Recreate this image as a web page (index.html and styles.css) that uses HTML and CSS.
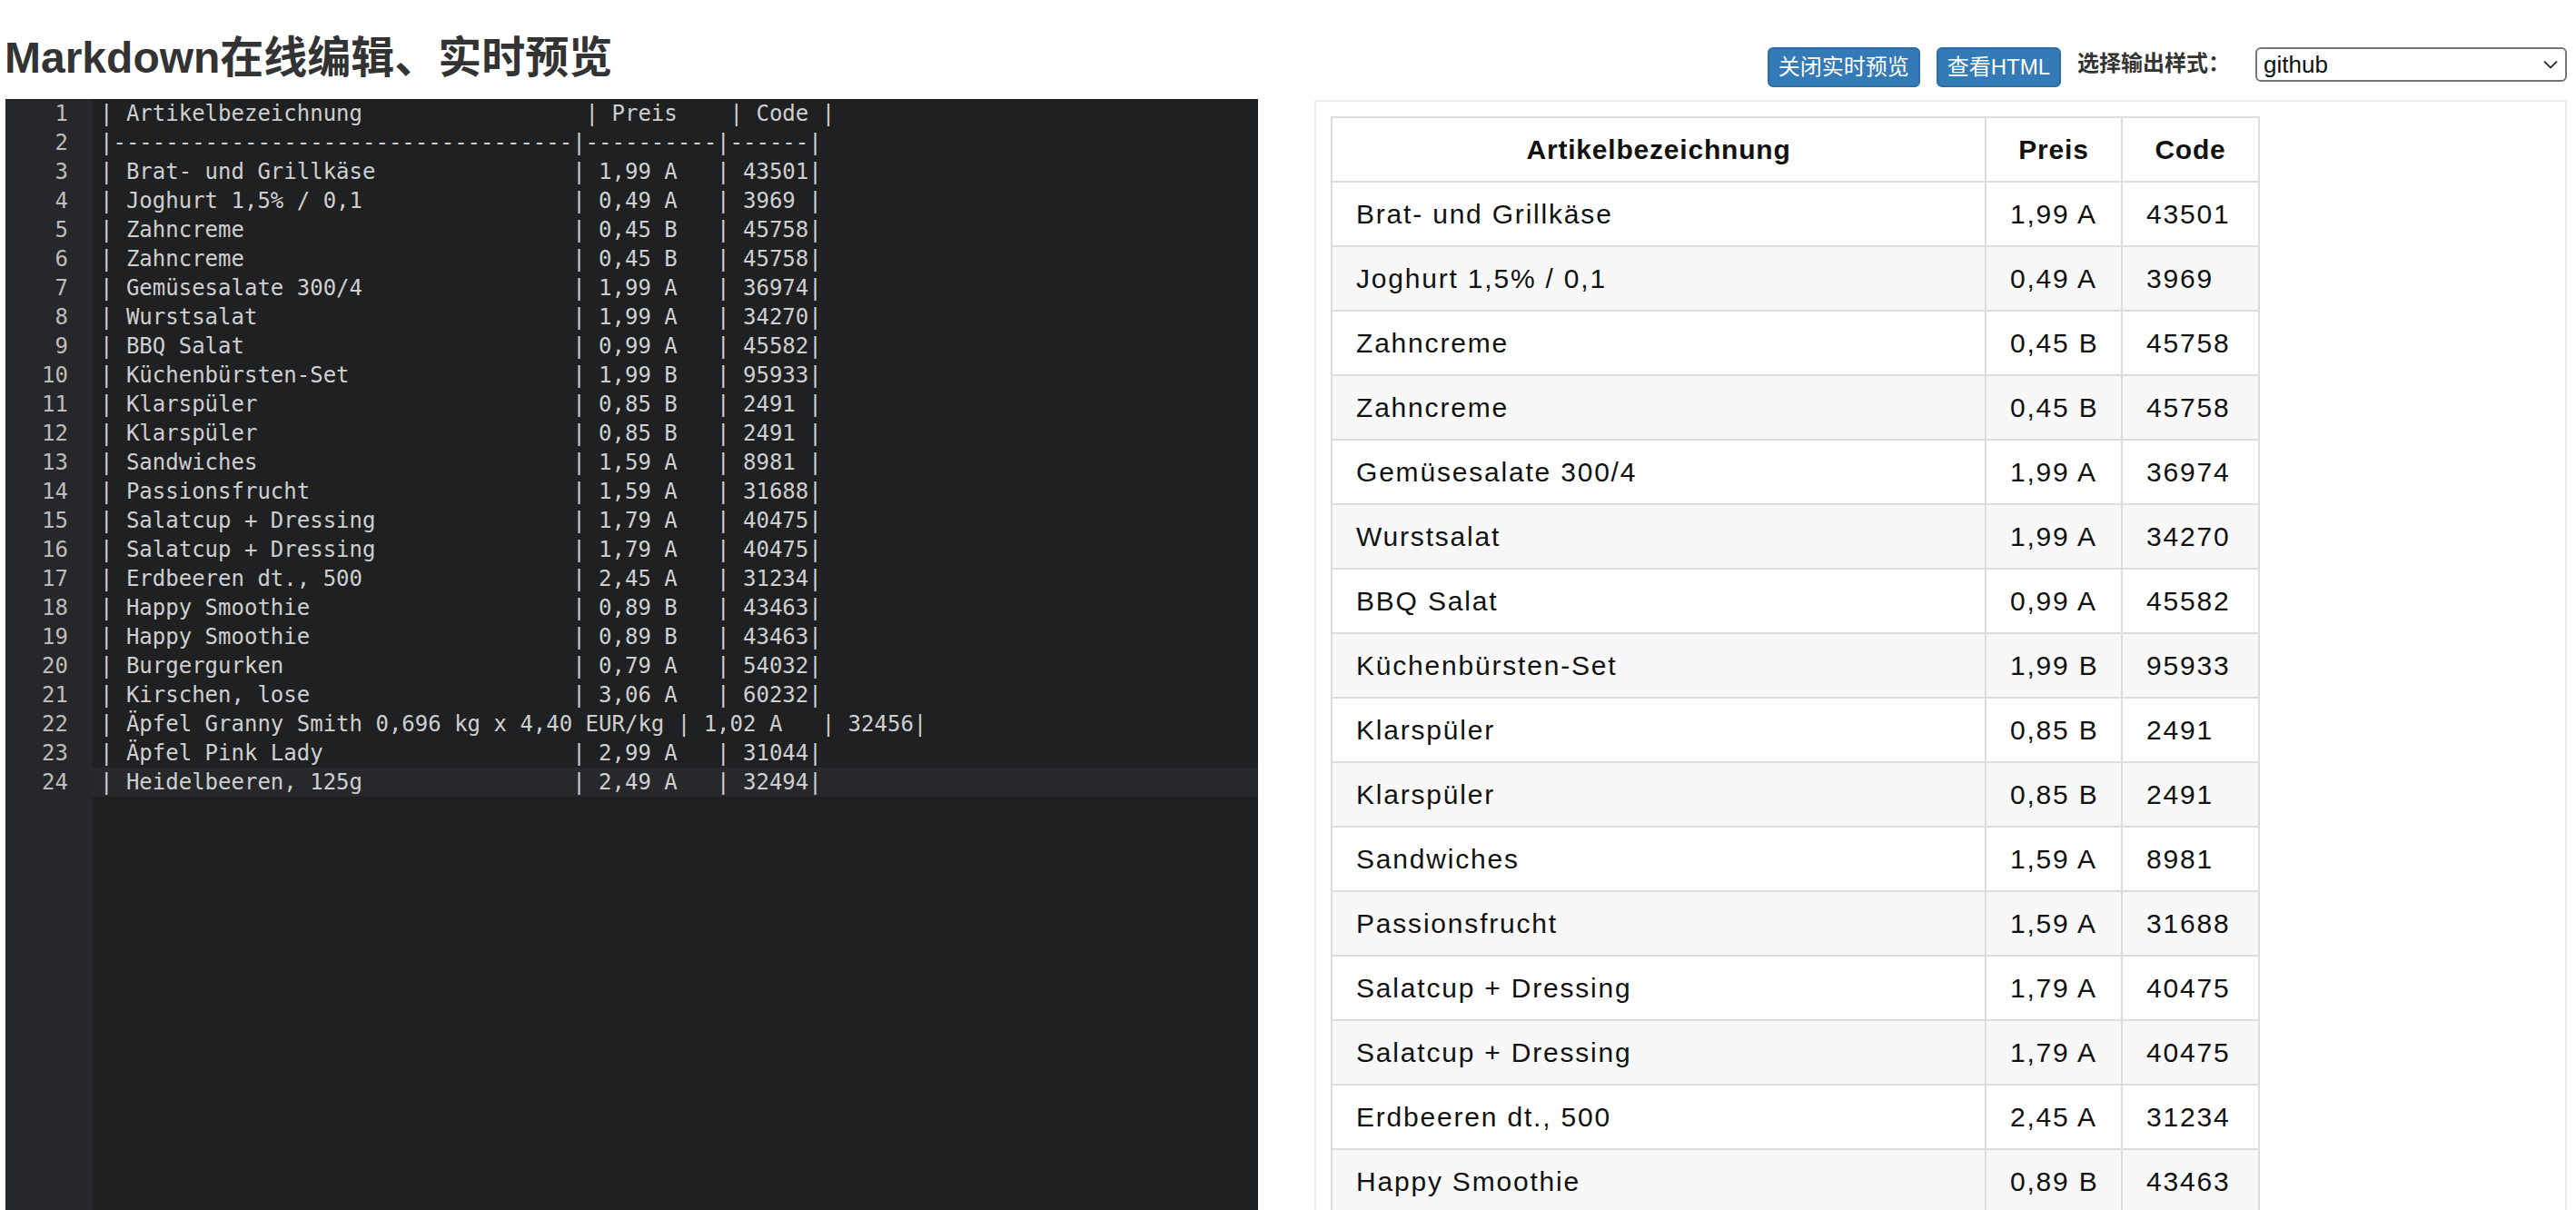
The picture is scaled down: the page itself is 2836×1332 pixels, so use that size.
FILE: index.html
```html
<!DOCTYPE html>
<html lang="zh-CN">
<head>
<meta charset="utf-8">
<title>Markdown在线编辑、实时预览</title>
<link rel="stylesheet" href="styles.css">
</head>
<body>
<div class="page">
  <header class="topbar">
    <h1 class="title">Markdown在线编辑、实时预览</h1>
    <div class="tools">
      <button class="btn" type="button">关闭实时预览</button>
      <button class="btn" type="button">查看HTML</button>
      <label class="tool-label">选择输出样式：</label>
      <div class="select">
        <span class="select-value">github</span>
        <svg class="chevron" width="16" height="10" viewBox="0 0 16 10"><polyline points="1,1.5 8,8.5 15,1.5" fill="none" stroke="#333" stroke-width="1.8"/></svg>
      </div>
    </div>
  </header>

  <main class="workspace">
    <section class="editor">
      <div class="gutter">
        <div class="ln">1</div><div class="ln">2</div><div class="ln">3</div><div class="ln">4</div><div class="ln">5</div><div class="ln">6</div><div class="ln">7</div><div class="ln">8</div><div class="ln">9</div><div class="ln">10</div><div class="ln">11</div><div class="ln">12</div><div class="ln">13</div><div class="ln">14</div><div class="ln">15</div><div class="ln">16</div><div class="ln">17</div><div class="ln">18</div><div class="ln">19</div><div class="ln">20</div><div class="ln">21</div><div class="ln">22</div><div class="ln">23</div><div class="ln">24</div>
      </div>
      <div class="code">
<div class="line">| Artikelbezeichnung                 | Preis    | Code |</div>
<div class="line">|-----------------------------------|----------|------|</div>
<div class="line">| Brat- und Grillkäse               | 1,99 A   | 43501|</div>
<div class="line">| Joghurt 1,5% / 0,1                | 0,49 A   | 3969 |</div>
<div class="line">| Zahncreme                         | 0,45 B   | 45758|</div>
<div class="line">| Zahncreme                         | 0,45 B   | 45758|</div>
<div class="line">| Gemüsesalate 300/4                | 1,99 A   | 36974|</div>
<div class="line">| Wurstsalat                        | 1,99 A   | 34270|</div>
<div class="line">| BBQ Salat                         | 0,99 A   | 45582|</div>
<div class="line">| Küchenbürsten-Set                 | 1,99 B   | 95933|</div>
<div class="line">| Klarspüler                        | 0,85 B   | 2491 |</div>
<div class="line">| Klarspüler                        | 0,85 B   | 2491 |</div>
<div class="line">| Sandwiches                        | 1,59 A   | 8981 |</div>
<div class="line">| Passionsfrucht                    | 1,59 A   | 31688|</div>
<div class="line">| Salatcup + Dressing               | 1,79 A   | 40475|</div>
<div class="line">| Salatcup + Dressing               | 1,79 A   | 40475|</div>
<div class="line">| Erdbeeren dt., 500                | 2,45 A   | 31234|</div>
<div class="line">| Happy Smoothie                    | 0,89 B   | 43463|</div>
<div class="line">| Happy Smoothie                    | 0,89 B   | 43463|</div>
<div class="line">| Burgergurken                      | 0,79 A   | 54032|</div>
<div class="line">| Kirschen, lose                    | 3,06 A   | 60232|</div>
<div class="line">| Äpfel Granny Smith 0,696 kg x 4,40 EUR/kg | 1,02 A   | 32456|</div>
<div class="line">| Äpfel Pink Lady                   | 2,99 A   | 31044|</div>
<div class="line active">| Heidelbeeren, 125g                | 2,49 A   | 32494|</div>
      </div>
    </section>

    <section class="preview">
      <table class="md-table">
        <colgroup><col class="c-name"><col class="c-price"><col class="c-code"></colgroup>
        <thead>
          <tr><th>Artikelbezeichnung</th><th>Preis</th><th>Code</th></tr>
        </thead>
        <tbody>
          <tr><td>Brat- und Grillkäse</td><td>1,99 A</td><td>43501</td></tr>
          <tr><td>Joghurt 1,5% / 0,1</td><td>0,49 A</td><td>3969</td></tr>
          <tr><td>Zahncreme</td><td>0,45 B</td><td>45758</td></tr>
          <tr><td>Zahncreme</td><td>0,45 B</td><td>45758</td></tr>
          <tr><td>Gemüsesalate 300/4</td><td>1,99 A</td><td>36974</td></tr>
          <tr><td>Wurstsalat</td><td>1,99 A</td><td>34270</td></tr>
          <tr><td>BBQ Salat</td><td>0,99 A</td><td>45582</td></tr>
          <tr><td>Küchenbürsten-Set</td><td>1,99 B</td><td>95933</td></tr>
          <tr><td>Klarspüler</td><td>0,85 B</td><td>2491</td></tr>
          <tr><td>Klarspüler</td><td>0,85 B</td><td>2491</td></tr>
          <tr><td>Sandwiches</td><td>1,59 A</td><td>8981</td></tr>
          <tr><td>Passionsfrucht</td><td>1,59 A</td><td>31688</td></tr>
          <tr><td>Salatcup + Dressing</td><td>1,79 A</td><td>40475</td></tr>
          <tr><td>Salatcup + Dressing</td><td>1,79 A</td><td>40475</td></tr>
          <tr><td>Erdbeeren dt., 500</td><td>2,45 A</td><td>31234</td></tr>
          <tr><td>Happy Smoothie</td><td>0,89 B</td><td>43463</td></tr>
          <tr><td>Happy Smoothie</td><td>0,89 B</td><td>43463</td></tr>
          <tr><td>Burgergurken</td><td>0,79 A</td><td>54032</td></tr>
          <tr><td>Kirschen, lose</td><td>3,06 A</td><td>60232</td></tr>
          <tr><td>Äpfel Granny Smith 0,696 kg x 4,40 EUR/kg</td><td>1,02 A</td><td>32456</td></tr>
          <tr><td>Äpfel Pink Lady</td><td>2,99 A</td><td>31044</td></tr>
          <tr><td>Heidelbeeren, 125g</td><td>2,49 A</td><td>32494</td></tr>
        </tbody>
      </table>
    </section>
  </main>
</div>
</body>
</html>
```

FILE: styles.css
```css
html, body {
  margin: 0;
  padding: 0;
  overflow: hidden;
  background: #fff;
}

body {
  font-family: "Liberation Sans", "Noto Sans CJK SC", sans-serif;
  color: #333;
}

.page {
  padding: 0 10px 0 6px;
}

/* ---------- top bar ---------- */
.topbar {
  display: flex;
  align-items: flex-start;
  height: 109px;
}

.title {
  margin: 36px 0 0 -1px;
  font-size: 48px;
  line-height: 55px;
  font-weight: 700;
  color: #333;
  white-space: nowrap;
}

.tools {
  margin-left: auto;
  margin-top: 52px;
  display: flex;
  align-items: flex-start;
}

.btn {
  font-family: "Liberation Sans", "Noto Sans CJK SC", sans-serif;
  font-size: 24px;
  line-height: 36px;
  color: #fff;
  background: #337ab7;
  border: 2px solid #2e6da4;
  border-radius: 6px;
  padding: 2px 10px;
  margin: 0 18px 0 0;
  cursor: pointer;
}

.tool-label {
  font-size: 24px;
  line-height: 36px;
  font-weight: 700;
  color: #333;
  margin-right: 28px;
  white-space: nowrap;
}

.select {
  box-sizing: border-box;
  width: 343px;
  height: 38px;
  border: 2px solid #767676;
  border-radius: 6px;
  background: #fff;
  display: flex;
  align-items: center;
  justify-content: space-between;
  padding: 0 8px 0 7px;
  font-size: 26px;
  color: #111;
}

.chevron {
  display: block;
}

/* ---------- workspace ---------- */
.workspace {
  display: grid;
  grid-template-columns: 1fr 1fr;
  column-gap: 62px;
  align-items: start;
}

.editor {
  display: grid;
  grid-template-columns: 96px 1fr;
  height: 1500px;
  background: #1f2022;
  font-family: "DejaVu Sans Mono", monospace;
  font-size: 24px;
  line-height: 32px;
}

.gutter {
  background: #26272b;
  color: #bdbdbd;
  text-align: right;
  padding-right: 27px;
}

.ln {
  height: 32px;
}

.code {
  color: #cfcfcf;
  min-width: 0;
}

.line {
  height: 32px;
  padding-left: 8px;
  white-space: pre;
}

.line.active {
  background: #27282c;
}

/* ---------- preview ---------- */
.preview {
  margin-top: 1px;
  border: 2px solid #eee;
  padding: 16px;
  background: #fff;
  min-height: 1500px;
}

.md-table {
  border-collapse: collapse;
  table-layout: fixed;
  width: 1021px;
  font-family: "Liberation Sans", sans-serif;
  font-size: 30px;
  line-height: 45px;
  color: #111;
}

.c-name { width: 720px; }
.c-price { width: 150px; }
.c-code { width: 151px; }

.md-table th,
.md-table td {
  border: 2px solid #ddd;
  padding: 12px 26px;
  white-space: nowrap;
}

.md-table th {
  font-weight: 700;
  text-align: center;
  letter-spacing: 0.8px;
  background: #fff;
}

.md-table td {
  text-align: left;
  letter-spacing: 1.8px;
}

.md-table tbody tr {
  background: #fff;
}

.md-table tbody tr:nth-child(2n) {
  background: #f8f8f8;
}
```
